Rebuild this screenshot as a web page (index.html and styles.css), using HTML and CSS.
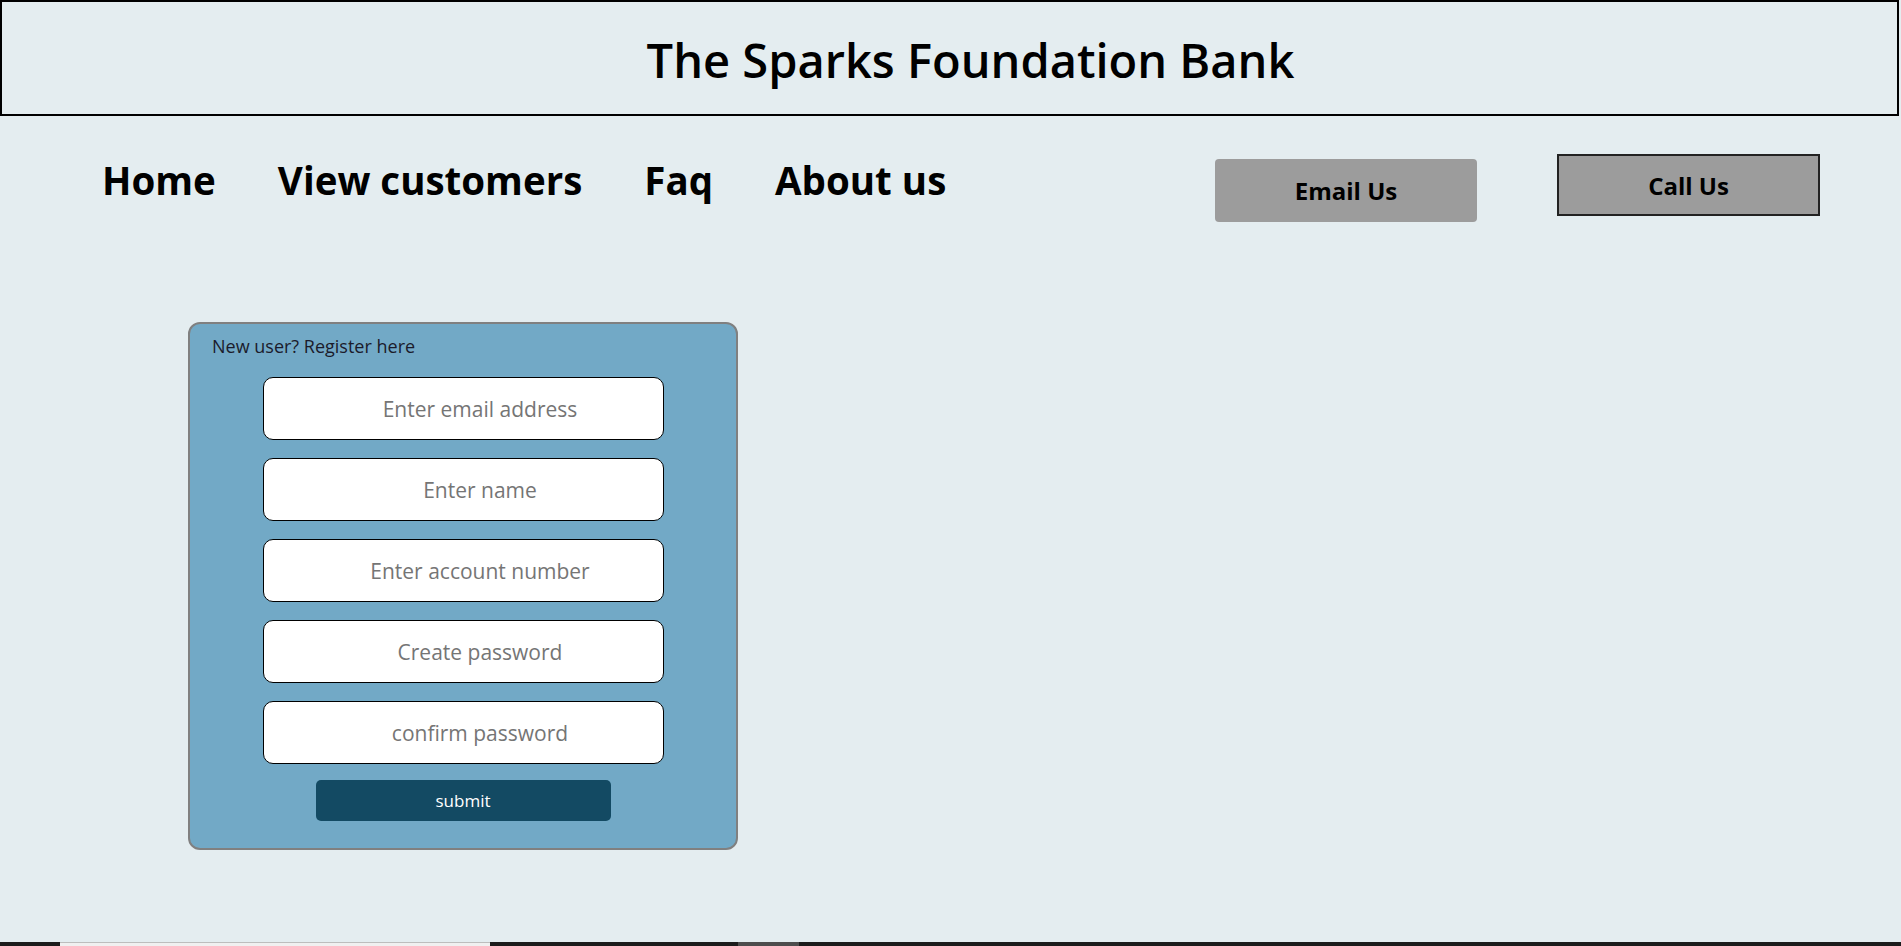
FILE: index.html
```html
<!DOCTYPE html>
<html lang="en">
<head>
<meta charset="utf-8">
<title>The Sparks Foundation Bank</title>
<link rel="stylesheet" href="styles.css">
</head>
<body>
<div class="page">
  <header class="banner">
    <h1 class="title">The Sparks Foundation Bank</h1>
  </header>
  <nav class="topnav">
    <div class="links">
      <a href="#" class="link">Home</a>
      <a href="#" class="link">View customers</a>
      <a href="#" class="link">Faq</a>
      <a href="#" class="link">About us</a>
    </div>
    <div class="actions">
      <button class="btn btn-email" type="button">Email Us</button>
      <button class="btn btn-call" type="button">Call Us</button>
    </div>
  </nav>
  <main class="content">
    <form class="register">
      <p class="register-title">New user? Register here</p>
      <input class="field" type="email" placeholder="Enter email address">
      <input class="field" type="text" placeholder="Enter name">
      <input class="field" type="text" placeholder="Enter account number">
      <input class="field" type="password" placeholder="Create password">
      <input class="field" type="password" placeholder="confirm password">
      <button class="submit" type="button">submit</button>
    </form>
  </main>
  <div class="taskbar">
    <span class="tb-light"></span>
    <span class="tb-gray"></span>
  </div>
</div>
</body>
</html>
```

FILE: styles.css
```css
html, body {
  margin: 0;
  padding: 0;
}

body {
  background: #e4edf0;
  font-family: "Open Sans", "Noto Sans", sans-serif;
  color: #000;
}

.page {
  display: flex;
  flex-direction: column;
  min-height: 100vh;
}

.banner {
  border: 2px solid #000;
  margin-right: 2px;
  padding: 34px 0 30px 42px;
}

.title {
  margin: 0;
  font-size: 47px;
  font-weight: 600;
  line-height: 48px;
  text-align: center;
}

.topnav {
  display: flex;
  align-items: flex-start;
  padding: 38px 81px 0 102px;
}

.links {
  display: flex;
  gap: 62px;
}

.link {
  font-size: 38.5px;
  line-height: 52px;
  font-weight: 700;
  color: #000;
  text-decoration: none;
}

.actions {
  margin-left: auto;
  display: flex;
  align-items: flex-start;
  gap: 80px;
}

.btn {
  font-family: "Open Sans", "Noto Sans", sans-serif;
  font-size: 24px;
  font-weight: 700;
  color: #000;
  background: #9c9c9c;
  padding: 0;
  box-sizing: border-box;
}

.btn-email {
  width: 262px;
  height: 63px;
  margin-top: 5px;
  border: none;
  border-radius: 4px;
}

.btn-call {
  width: 263px;
  height: 62px;
  border: 2px solid #222;
  border-radius: 0;
}

.content {
  padding: 100px 0 0 188px;
}

.register {
  width: 550px;
  box-sizing: border-box;
  border: 2px solid #808080;
  border-radius: 12px;
  background: #72a9c6;
  padding: 10px 0 27px;
  display: flex;
  flex-direction: column;
  align-items: center;
}

.register-title {
  align-self: flex-start;
  margin: 0 0 18px 22px;
  font-size: 18px;
  line-height: 25px;
  color: #1b1b2b;
}

.field {
  width: 401px;
  height: 63px;
  box-sizing: border-box;
  border: 1px solid #000;
  border-radius: 10px;
  background: #fff;
  padding: 0 0 0 34px;
  text-align: center;
  font-family: "Open Sans", "Noto Sans", sans-serif;
  font-size: 21px;
  color: #333;
}

.field::placeholder {
  color: #757575;
}

.field + .field {
  margin-top: 18px;
}

.submit {
  margin-top: 16px;
  width: 295px;
  height: 41px;
  border: none;
  border-radius: 5px;
  background: #134a63;
  color: #fff;
  font-family: "Open Sans", "Noto Sans", sans-serif;
  font-size: 17px;
}

.taskbar {
  margin-top: auto;
  height: 4px;
  background: #1c1c1c;
  display: flex;
}

.tb-light {
  margin-left: 60px;
  width: 430px;
  background: #f0f0f0;
  border-top: 1px solid #bdbdbd;
}

.tb-gray {
  margin-left: 248px;
  width: 61px;
  background: #4d4d4d;
}
```
